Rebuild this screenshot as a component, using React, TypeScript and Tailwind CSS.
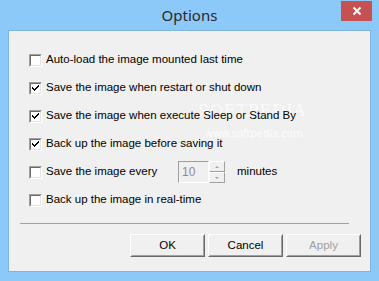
const rows = [
  { label: "Auto-load the image mounted last time", checked: false },
  { label: "Save the image when restart or shut down", checked: true },
  { label: "Save the image when execute Sleep or Stand By", checked: true },
  { label: "Back up the image before saving it", checked: true },
  { label: "Save the image every", checked: false, spinner: true },
  { label: "Back up the image in real-time", checked: false },
];

function CheckBox({ checked }: { checked: boolean }) {
  return (
    <span className="box-border flex h-[13px] w-[13px] shrink-0 border border-t-[#a0a0a0] border-l-[#a0a0a0] border-b-white border-r-white">
      <span className="flex h-full w-full items-center justify-center border border-t-[#696969] border-l-[#696969] border-b-[#e3e3e3] border-r-[#e3e3e3] bg-white">
        {checked && (
          <svg width="7" height="7" viewBox="0 0 7 7">
            <path d="M0 2h1v1h1v1h1V3h1V2h1V1h1V0h1v2H6v1H5v1H4v1H3v1H2V5H1V4H0z" fill="#000" />
          </svg>
        )}
      </span>
    </span>
  );
}

function Spinner() {
  return (
    <div className="flex items-center">
      <div className="box-border flex h-[22px] w-[31px] items-center border border-t-[#a0a0a0] border-l-[#a0a0a0] border-b-white border-r-white bg-[#f0f0f0] pl-[3px] text-[12px] text-[#8a8a8a]">
        10
      </div>
      <div className="flex flex-col">
        <div className="box-border flex h-[11px] w-[16px] items-center justify-center border border-t-white border-l-white border-b-[#a0a0a0] border-r-[#a0a0a0] bg-[#f0f0f0]">
          <span className="h-0 w-0 border-x-[2px] border-b-[2px] border-x-transparent border-b-[#a0a0a0]" />
        </div>
        <div className="box-border flex h-[11px] w-[16px] items-center justify-center border border-t-white border-l-white border-b-[#a0a0a0] border-r-[#a0a0a0] bg-[#f0f0f0]">
          <span className="h-0 w-0 border-x-[2px] border-t-[2px] border-x-transparent border-t-[#a0a0a0]" />
        </div>
      </div>
      <span className="ml-[12px]">minutes</span>
    </div>
  );
}

function Button({ label, disabled }: { label: string; disabled?: boolean }) {
  return (
    <button className="box-border flex h-[23px] w-[75px] border border-t-white border-l-white border-b-[#696969] border-r-[#696969] bg-[#f0f0f0] p-0">
      <span
        className={`flex h-full w-full items-center justify-center border border-t-[#f0f0f0] border-l-[#f0f0f0] border-b-[#a0a0a0] border-r-[#a0a0a0] text-[11.5px] ${
          disabled ? "text-[#a0a0a0]" : "text-black"
        }`}
      >
        {label}
      </span>
    </button>
  );
}

export default function App() {
  return (
    <div className="flex h-[281px] w-[379px] flex-col bg-[#8cc8f8] font-['Liberation_Sans',Arial,sans-serif]">
      <div className="relative flex h-[30px] items-center justify-center">
        <span className="font-['Noto_Sans',sans-serif] text-[15px] text-[#2a2a2a]">Options</span>
        <div className="absolute right-[7px] top-[1px] flex h-[20px] w-[31px] items-center justify-center bg-[#c75050]">
          <svg width="10" height="10" viewBox="0 0 10 10">
            <path d="M1.5 1.5l7 7M8.5 1.5l-7 7" stroke="#fff" strokeWidth="2" />
          </svg>
        </div>
      </div>
      <div className="relative mx-[8px] box-border flex h-[242px] flex-col border border-[#7fb4de] bg-[#f0f0f0] text-[11.5px] text-black">
        <div className="pointer-events-none absolute left-[189px] top-[68px] font-['DejaVu_Serif',serif] text-[16px] tracking-[1px] text-white/70">
          SOFTPEDIA
        </div>
        <div className="pointer-events-none absolute left-[196px] top-[95px] font-['DejaVu_Sans',sans-serif] text-[10px] text-white/80">
          www.softpedia.com
        </div>
        <div className="relative flex flex-col gap-[12px] pl-[20px] pt-[21px]">
          {rows.map((r) => (
            <div key={r.label} className="flex h-[16px] items-center">
              <CheckBox checked={r.checked} />
              <span className={`ml-[4px] whitespace-nowrap ${r.spinner ? "w-[132px]" : ""}`}>{r.label}</span>
              {r.spinner && <Spinner />}
            </div>
          ))}
        </div>
        <div className="ml-[11px] mt-[15px] h-px w-[329px] bg-[#a0a0a0]" />
        <div className="mt-[10px] flex justify-end gap-[3px] pr-[9px]">
          <Button label="OK" />
          <Button label="Cancel" />
          <Button label="Apply" disabled />
        </div>
      </div>
    </div>
  );
}
